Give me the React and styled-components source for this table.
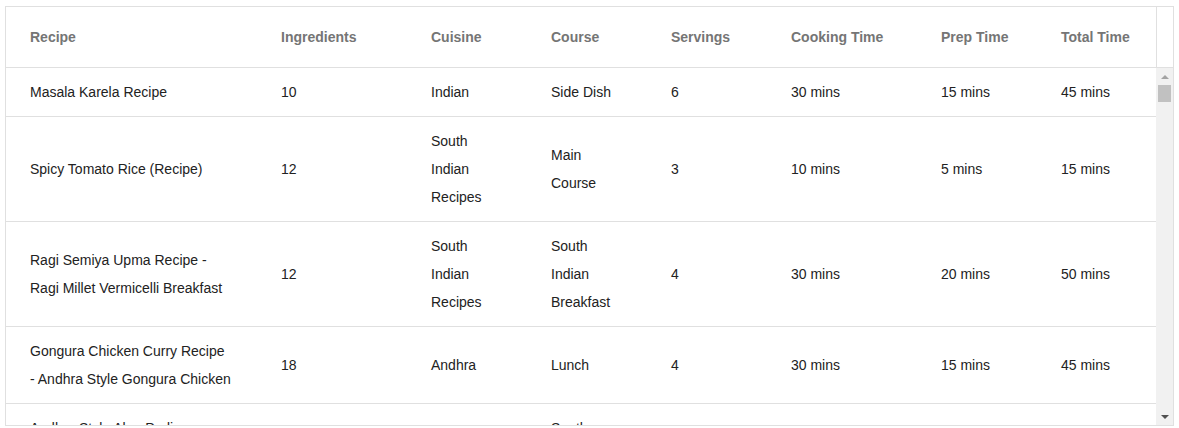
import React from 'react';
import styled, { createGlobalStyle } from 'styled-components';

const columns = [
    { key: 'recipe', label: 'Recipe', width: 251 },
    { key: 'ingredients', label: 'Ingredients', width: 150 },
    { key: 'cuisine', label: 'Cuisine', width: 120 },
    { key: 'course', label: 'Course', width: 120 },
    { key: 'servings', label: 'Servings', width: 120 },
    { key: 'cooking', label: 'Cooking Time', width: 150 },
    { key: 'prep', label: 'Prep Time', width: 120 },
    { key: 'total', label: 'Total Time', width: 119 },
];

const gridColumns = columns.map(c => `${c.width}px`).join(' ');

const recipes = [
    {
        recipe: ['Masala Karela Recipe'],
        ingredients: ['10'],
        cuisine: ['Indian'],
        course: ['Side Dish'],
        servings: ['6'],
        cooking: ['30 mins'],
        prep: ['15 mins'],
        total: ['45 mins'],
    },
    {
        recipe: ['Spicy Tomato Rice (Recipe)'],
        ingredients: ['12'],
        cuisine: ['South', 'Indian', 'Recipes'],
        course: ['Main', 'Course'],
        servings: ['3'],
        cooking: ['10 mins'],
        prep: ['5 mins'],
        total: ['15 mins'],
    },
    {
        recipe: ['Ragi Semiya Upma Recipe -', 'Ragi Millet Vermicelli Breakfast'],
        ingredients: ['12'],
        cuisine: ['South', 'Indian', 'Recipes'],
        course: ['South', 'Indian', 'Breakfast'],
        servings: ['4'],
        cooking: ['30 mins'],
        prep: ['20 mins'],
        total: ['50 mins'],
    },
    {
        recipe: ['Gongura Chicken Curry Recipe', '- Andhra Style Gongura Chicken'],
        ingredients: ['18'],
        cuisine: ['Andhra'],
        course: ['Lunch'],
        servings: ['4'],
        cooking: ['30 mins'],
        prep: ['15 mins'],
        total: ['45 mins'],
    },
    {
        recipe: ['Andhra Style Aloo Podimas', 'Recipe - Spiced Potato', 'Podimas'],
        ingredients: ['10'],
        cuisine: ['Andhra'],
        course: ['South', 'Indian', 'Recipes'],
        servings: ['2'],
        cooking: ['20 mins'],
        prep: ['10 mins'],
        total: ['30 mins'],
    },
];

function App() {
    return (
        <>
            <GlobalStyle />
            <TableFrame>
                <HeaderRow>
                    <HeaderCells>
                        {columns.map(col => (
                            <HeaderCell key={col.key}>{col.label}</HeaderCell>
                        ))}
                    </HeaderCells>
                    <HeaderGutter />
                </HeaderRow>
                <BodyArea>
                    <Rows>
                        {recipes.map((item, i) => (
                            <Row key={i}>
                                {columns.map(col => (
                                    <Cell key={col.key}>
                                        <div>
                                            {item[col.key].map((line, j) => (
                                                <Line key={j}>{line}</Line>
                                            ))}
                                        </div>
                                    </Cell>
                                ))}
                            </Row>
                        ))}
                    </Rows>
                    <Scrollbar>
                        <ArrowButton>
                            <Arrow $up />
                        </ArrowButton>
                        <Thumb />
                        <Track />
                        <ArrowButton>
                            <Arrow />
                        </ArrowButton>
                    </Scrollbar>
                </BodyArea>
            </TableFrame>
        </>
    );
}

export default App;

const GlobalStyle = createGlobalStyle`
    body {
        margin: 0;
        padding: 6px 0 0 5px;
        background: #ffffff;
        font-family: "Liberation Sans", Arial, sans-serif;
    }
`

const TableFrame = styled.div`
    width: 1167px;
    border: 1px solid #e0e0e0;
    background: #ffffff;
`

const HeaderRow = styled.div`
    display: flex;
    border-bottom: 1px solid #e0e0e0;
`

const HeaderCells = styled.div`
    display: grid;
    grid-template-columns: ${gridColumns};
    border-right: 1px solid #e0e0e0;
`

const HeaderCell = styled.div`
    height: 60px;
    display: flex;
    align-items: center;
    padding-left: 24px;
    font-size: 14px;
    font-weight: bold;
    color: #757575;
    white-space: nowrap;
`

const HeaderGutter = styled.div`
    width: 16px;
`

const BodyArea = styled.div`
    display: flex;
    height: 357px;
    overflow: hidden;
`

const Rows = styled.div`
    width: 1150px;
`

const Row = styled.div`
    display: grid;
    grid-template-columns: ${gridColumns};
    border-bottom: 1px solid #e0e0e0;
`

const Cell = styled.div`
    display: flex;
    align-items: center;
    padding: 10px 0 10px 24px;
    font-size: 14px;
    line-height: 28px;
    color: #222222;
    white-space: nowrap;
`

const Line = styled.div`
    height: 28px;
`

const Scrollbar = styled.div`
    width: 17px;
    height: 357px;
    display: flex;
    flex-direction: column;
    background: #f1f1f1;
`

const ArrowButton = styled.div`
    height: 17px;
    display: flex;
    align-items: center;
    justify-content: center;
`

const Arrow = styled.div`
    width: 0;
    height: 0;
    border-left: 4px solid transparent;
    border-right: 4px solid transparent;
    ${p => p.$up
        ? 'border-bottom: 4px solid #a3a3a3;'
        : 'border-top: 4px solid #505050;'}
`

const Thumb = styled.div`
    height: 17px;
    margin: 0 2px;
    background: #c1c1c1;
`

const Track = styled.div`
    flex: 1;
`
